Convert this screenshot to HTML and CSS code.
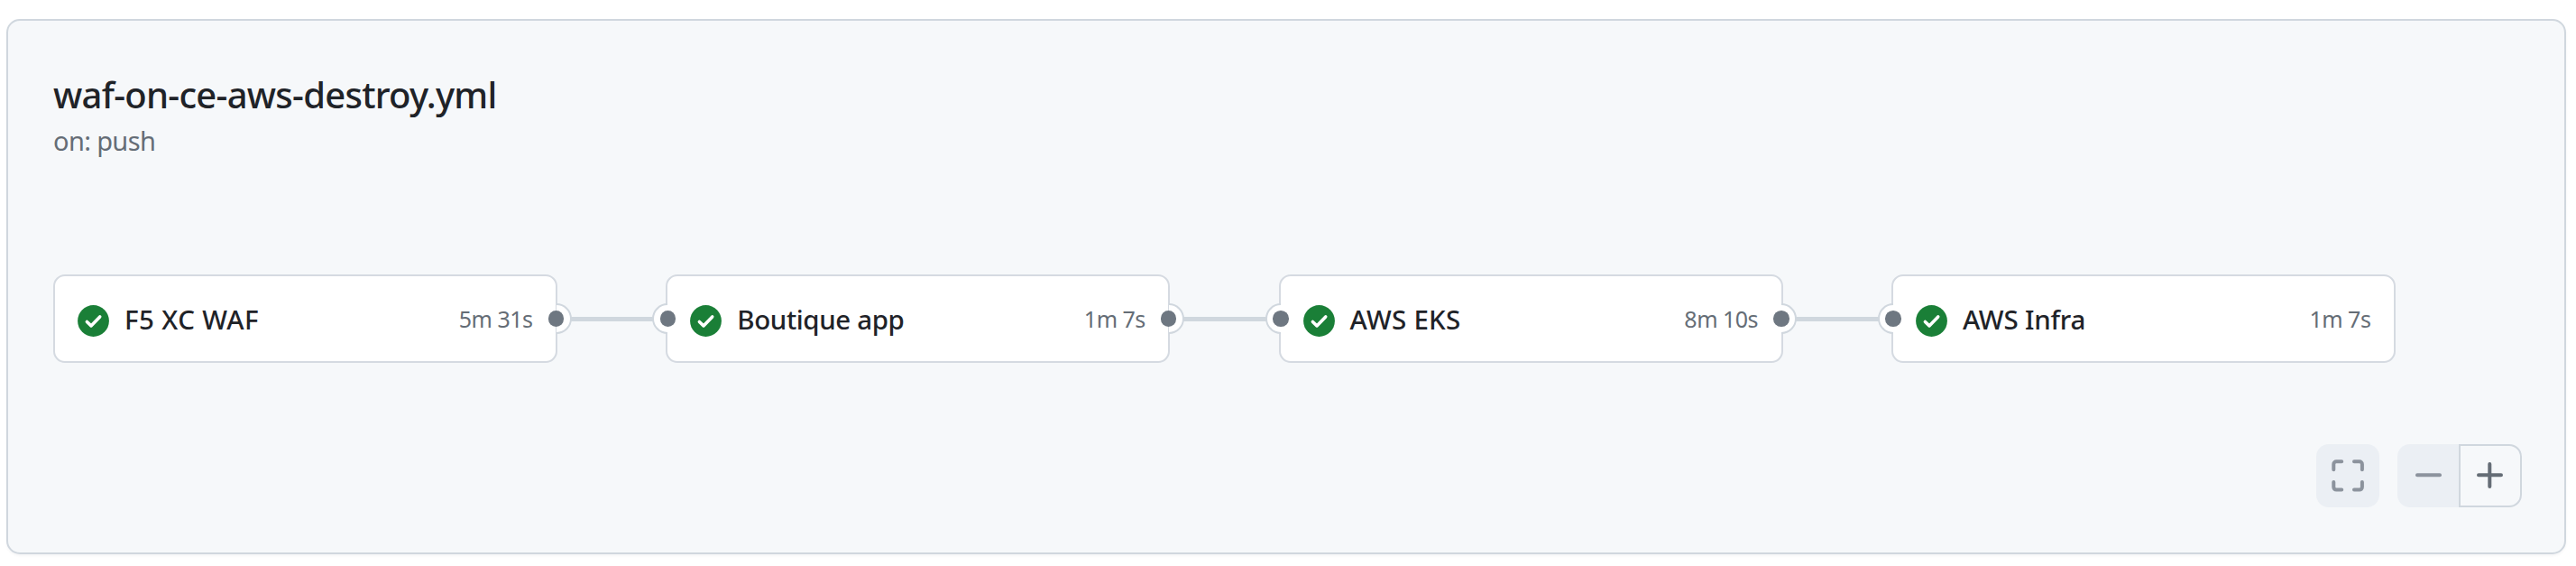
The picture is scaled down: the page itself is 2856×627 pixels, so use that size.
FILE: index.html
```html
<!DOCTYPE html>
<html lang="en">
<head>
<meta charset="utf-8">
<title>waf-on-ce-aws-destroy.yml</title>
<link rel="stylesheet" href="styles.css">
</head>
<body>
<svg class="defs" aria-hidden="true">
  <symbol id="check" viewBox="0 0 35 35">
    <circle cx="17.5" cy="17.5" r="17.4" fill="#1a7f37"/>
    <path d="M10.4 18.5 L15 22.9 L24.7 12.9" fill="none" stroke="#fff" stroke-width="3.6" stroke-linecap="round" stroke-linejoin="round"/>
  </symbol>
</svg>
<main class="panel">
  <header class="head">
    <h1 class="title">waf-on-ce-aws-destroy.yml</h1>
    <p class="trigger">on: push</p>
  </header>
  <section class="graph">
    <div class="job"><svg class="status"><use href="#check"/></svg><span class="name waf">F5 XC WAF</span><span class="time">5m 31s</span><i class="port out"></i></div>
    <div class="link"></div>
    <div class="job"><i class="port in"></i><svg class="status"><use href="#check"/></svg><span class="name boutique">Boutique app</span><span class="time">1m 7s</span><i class="port out"></i></div>
    <div class="link"></div>
    <div class="job"><i class="port in"></i><svg class="status"><use href="#check"/></svg><span class="name eks">AWS EKS</span><span class="time">8m 10s</span><i class="port out"></i></div>
    <div class="link"></div>
    <div class="job"><i class="port in"></i><svg class="status"><use href="#check"/></svg><span class="name infra">AWS Infra</span><span class="time">1m 7s</span></div>
  </section>
  <footer class="controls">
    <button class="btn fit" aria-label="Fit to window"><svg width="70" height="70" viewBox="0 0 70 70"><path d="M19.3 28.2V22.3a3 3 0 0 1 3-3H28.2M42 19.3h5.9a3 3 0 0 1 3 3V28.2M50.9 42v5.6a3 3 0 0 1-3 3H42M28.2 50.6H22.3a3 3 0 0 1-3-3V42"/></svg></button>
    <div class="zoom">
      <button class="btn minus" aria-label="Zoom out"><svg width="68" height="70" viewBox="0 0 68 70"><path d="M22 34.2H47"/></svg></button>
      <button class="btn plus" aria-label="Zoom in"><svg width="66" height="66" viewBox="0 0 66 66"><path d="M20 32.2H45M32.3 19.9V44.9"/></svg></button>
    </div>
  </footer>
</main>
</body>
</html>
```
FILE: styles.css
```css
* { box-sizing: border-box; }
body {
  margin: 0;
  padding: 21px 11px 13px 7px;
  height: 627px;
  background: #fff;
  font-family: "Segoe UI", "Noto Sans", "Open Sans", sans-serif;
}
.defs { position: absolute; width: 0; height: 0; }
.panel {
  display: flex;
  flex-direction: column;
  width: 2838px;
  height: 593px;
  padding: 56px 47px 50px 50px;
  border: 2px solid #d0d7de;
  border-radius: 15px;
  background: #f6f8fa;
  box-shadow: 0 2px 3px rgba(31, 35, 40, .04);
}
.head { height: 225px; }
.title {
  margin: 0;
  font-size: 40px;
  line-height: 52px;
  font-weight: 500;
  letter-spacing: -.74px;
  color: #1f2328;
  white-space: nowrap;
}
.trigger {
  margin: 5px 0 0;
  font-size: 29px;
  line-height: 40px;
  letter-spacing: -.65px;
  color: #656d76;
}
.graph { display: flex; align-items: center; height: 98px; }
.job {
  position: relative;
  display: flex;
  align-items: center;
  flex: none;
  width: 559px;
  height: 98px;
  padding: 0 25.5px 0 25px;
  border: 2px solid #d5dae1;
  border-radius: 13px;
  background: #fff;
}
.status { flex: none; width: 35px; height: 35px; margin-top: 5px; }
.name {
  margin: 1px 0 0 17px;
  font-size: 29.5px;
  line-height: 40px;
  font-weight: 500;
  color: #1f2328;
  white-space: nowrap;
}
.waf { letter-spacing: .4px; }
.boutique { letter-spacing: -.4px; }
.eks { letter-spacing: .25px; }
.infra { letter-spacing: -.2px; }
.time {
  margin-left: auto;
  font-size: 25px;
  line-height: 40px;
  letter-spacing: -.5px;
  color: #656d76;
  white-space: nowrap;
}
.link { flex: none; width: 120.3px; height: 5px; background: #d0d7de; }
.port {
  position: absolute;
  top: 30px;
  width: 17px;
  height: 34px;
  border: 2px solid #d0d7de;
  background: #fff;
}
.port::after {
  content: "";
  position: absolute;
  top: 6.3px;
  width: 17.6px;
  height: 17.6px;
  border-radius: 50%;
  background: #6e7781;
}
.port.out { right: -17.5px; border-left: 0; border-radius: 0 17px 17px 0; }
.port.out::after { left: -9px; }
.port.in { left: -17px; border-right: 0; border-radius: 17px 0 0 17px; }
.port.in::after { right: -9px; }
.controls { display: flex; justify-content: flex-end; gap: 20px; margin-top: 90px; }
.btn {
  display: block;
  height: 70px;
  margin: 0;
  padding: 0;
  border: 0;
  background: #ebeff4;
}
.btn svg { display: block; }
.btn path {
  fill: none;
  stroke: #8c939d;
  stroke-width: 4;
  stroke-linecap: round;
}
.fit { width: 70px; border-radius: 14px; }
.zoom { display: flex; }
.minus { width: 68px; border-radius: 14px 0 0 14px; }
.plus {
  width: 70px;
  border: 2px solid #d0d7de;
  border-radius: 0 14px 14px 0;
  background: #f6f8fa;
}
.plus path { stroke: #656d76; }
```
